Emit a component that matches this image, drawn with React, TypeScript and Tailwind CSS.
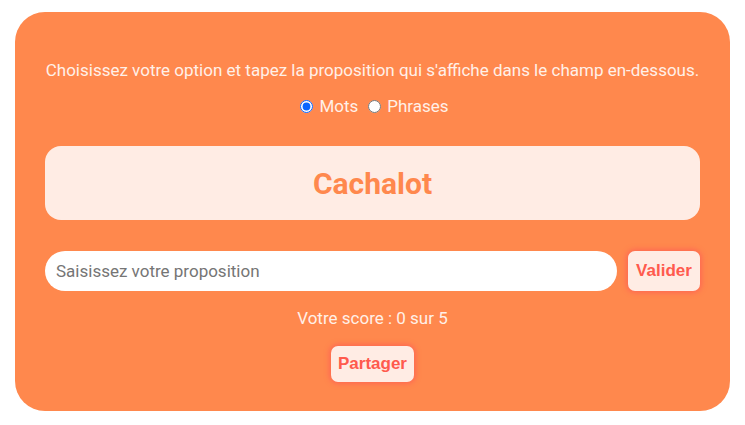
import React, { useState } from "react";

export default function App() {
  const [mode, setMode] = useState<"mots" | "phrases">("mots");
  return (
    <div className="min-h-[425px] w-[745px] bg-white pt-3 pl-[15px] font-['Roboto',sans-serif]">
      <div className="flex w-[715px] flex-col items-center rounded-[30px] bg-[#ff884d] px-[30px] pt-[48px] pb-[29px] text-[#fff0e8]">
        <p className="text-[17px] leading-[20px]">
          Choisissez votre option et tapez la proposition qui s'affiche dans le champ en-dessous.
        </p>
        <div className="mt-4 flex items-center pl-1 text-[17px] leading-[20px]">
          <label className="flex items-center gap-[6px]">
            <input
              type="radio"
              name="mode"
              checked={mode === "mots"}
              onChange={() => setMode("mots")}
              className="m-0 h-[13px] w-[13px] accent-[#0a64ff]"
            />
            Mots
          </label>
          <label className="ml-[10px] flex items-center gap-[6px]">
            <input
              type="radio"
              name="mode"
              checked={mode === "phrases"}
              onChange={() => setMode("phrases")}
              className="m-0 h-[13px] w-[13px]"
            />
            Phrases
          </label>
        </div>
        <div className="mt-[30px] flex h-[74px] w-full items-center justify-center rounded-[16px] bg-[#ffece4]">
          <span className="text-[30px] font-bold text-[#ff884d]">Cachalot</span>
        </div>
        <div className="mt-[31px] flex w-full items-center gap-[11px]">
          <input
            placeholder="Saisissez votre proposition"
            className="h-10 flex-1 rounded-full bg-white px-[11px] text-[17px] text-[#333] outline-none placeholder:text-[#757575]"
          />
          <button className="h-10 w-[72px] rounded-[7px] bg-[#ffece4] font-['Liberation_Sans',sans-serif] text-[17px] font-bold text-[#ff5a4d] shadow-[0_0_5px_2px_#ff6a52]">
            Valider
          </button>
        </div>
        <p className="mt-[17px] text-[17px] leading-[20px]">Votre score : 0 sur 5</p>
        <button className="mt-[18px] h-9 w-[83px] rounded-[7px] bg-[#ffece4] font-['Liberation_Sans',sans-serif] text-[17px] font-bold text-[#ff5a4d] shadow-[0_0_5px_2px_#ff6a52]">
          Partager
        </button>
      </div>
    </div>
  );
}
